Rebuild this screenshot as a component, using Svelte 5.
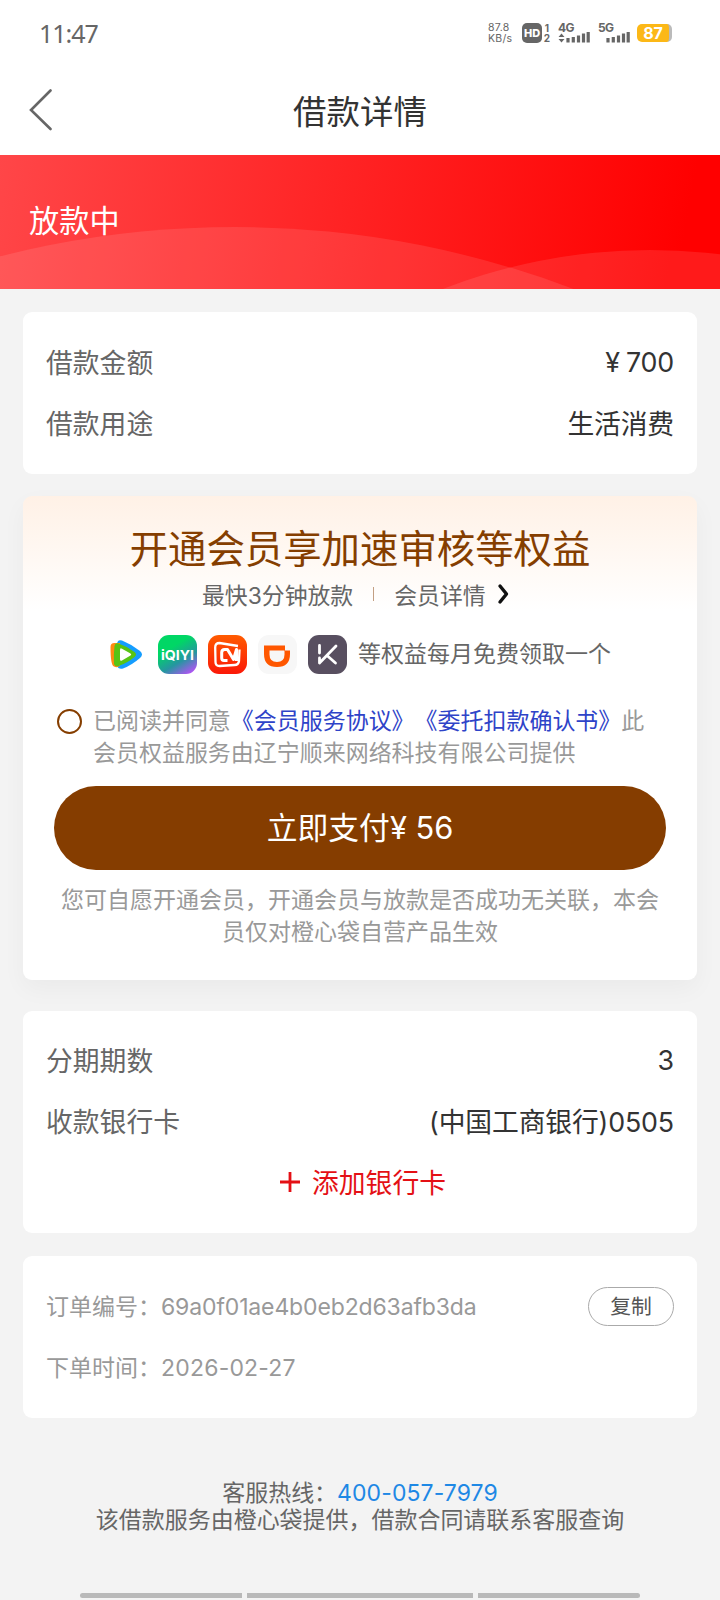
<script lang="ts">
  const amountRows = [
    { label: "借款金额", value: "700", currency: true },
    { label: "借款用途", value: "生活消费", currency: false },
  ]
  const accountRows = [
    { label: "分期期数", value: "3" },
    { label: "收款银行卡", value: "(中国工商银行)0505" },
  ]

  let agreed = false
</script>

<div class="page">
  <div class="status">
    <span class="clock">11:47</span>
    <div class="indicators">
      <span class="speed"><span>87.8</span><span>KB/s</span></span>
      <span class="hd">HD</span>
      <span class="sims"><span>1</span><span>2</span></span>
      <svg class="signal first" width="32" height="26" viewBox="0 -4 32 26">
        <text x="0" y="9">4G</text>
        <path d="M3.5 10.500 6.500 14H.5ZM3.5 19.500.5 16h6Z" />
        <path d="M10 15v4.500M15.300 14v5.500M20.500 12.500v7M25.500 10.500v9M30.200 9v10.500" />
      </svg>
      <svg class="signal second" width="32" height="26" viewBox="0 -4 32 26">
        <text x="0" y="9">5G</text>
        <path d="M10 15v4.500M15.300 14v5.500M20.500 12.500v7M25.500 10.500v9M30.200 9v10.500" />
      </svg>
      <span class="battery">87</span>
    </div>
  </div>

  <header>
    <button class="back" aria-label="返回">
      <svg width="24" height="42" viewBox="0 0 24 42"><path d="M21.500 1.500 2 21l19.500 19" /></svg>
    </button>
    <h1>借款详情</h1>
  </header>

  <section class="banner">
    <svg class="waves" width="720" height="134" viewBox="0 0 720 134">
      <circle cx="235" cy="1027" r="955" />
      <circle cx="650" cy="665" r="570" />
    </svg>
    <span>放款中</span>
  </section>

  <main>
    <section class="card amount">
      {#each amountRows as row}
        <div class="row">
          <span class="label">{row.label}</span>
          <span class="value">{#if row.currency}<span class="yen">¥</span>{/if}{row.value}</span>
        </div>
      {/each}
    </section>

    <section class="card member">
      <h2>开通会员享加速审核等权益</h2>
      <div class="subtitle">
        <span>最快3分钟放款</span>
        <span class="divider"></span>
        <span>会员详情</span>
        <svg width="14" height="22" viewBox="0 0 14 22"><path d="m3 3 6.500 8L3 19" /></svg>
      </div>

      <div class="perks">
        <svg width="39" height="39" viewBox="0 0 39 39">
          <path d="M9 9q.5-5 5-3.500Q24 9.500 32 16q4 3.500 0 7-8 7-17 10.500-5 1-6-3Z" fill="#159dff" />
          <path d="M2.500 12q0-4 4-4H12v23q-3 2-6 .5Q2.500 30.500 2.500 12Z" fill="#ff8b13" />
          <path d="M6.500 11q.5-3.500 4-2.500 9 3 16 8.500 3 2.500 0 5-7 6-16 9-4 1-4.500-2.500-.5-9 .5-17.500Z" fill="#58c414" />
          <path d="M12 15q0-2.500 2-1.300l8.500 4.800q1.500 1 0 2L14 25.500q-2 1-2-1.300Z" fill="#fff" />
        </svg>
        <svg width="39" height="39" viewBox="0 0 39 39">
          <defs>
            <linearGradient id="iqiyi" x1=".3" y1="0" x2=".9" y2="1">
              <stop offset=".25" stop-color="#00d765" />
              <stop offset=".62" stop-color="#2596a0" />
              <stop offset="1" stop-color="#c34bff" />
            </linearGradient>
          </defs>
          <rect width="39" height="39" rx="11" fill="url(#iqiyi)" />
          <text x="3" y="24.500" textLength="33" lengthAdjust="spacingAndGlyphs">iQIYI</text>
        </svg>
        <svg width="39" height="39" viewBox="0 0 39 39">
          <defs>
            <linearGradient id="mango" x1="0" y1="0" x2="0" y2="1">
              <stop stop-color="#ff5b00" /><stop offset="1" stop-color="#fb1808" />
            </linearGradient>
          </defs>
          <rect width="39" height="39" rx="11" fill="url(#mango)" />
          <g fill="none" stroke="#fff" stroke-linejoin="round">
            <path d="M31.500 14.500 31 26q-.5 4-4.500 4l-15 1q-4 0-4-4l-.3-14.500q0-4.500 4.300-4.500l18.500 3" stroke-width="2.300" />
            <path d="M19.500 25.500H16q-2.300 0-2.300-2.500v-5.500q0-3 3-3h2.800l6 10 3-10v11.500" stroke-width="3" />
          </g>
        </svg>
        <svg width="39" height="39" viewBox="0 0 39 39">
          <rect width="39" height="39" rx="11" fill="#f7f7f7" />
          <path d="M6 10.500h21v5h5v3.500q0 13-13 13T6 19Zm5.500 5v4q0 7.500 7.500 7.500t7.500-7.500v-4Z" fill="#ff5700" fill-rule="evenodd" />
        </svg>
        <svg width="39" height="39" viewBox="0 0 39 39">
          <rect width="39" height="39" rx="11" fill="#584f60" />
          <path d="M11.500 10.500V18M28 11 11.500 28V23M19 20.500l8.500 7.500" fill="none" stroke="#fff" stroke-width="2.800" stroke-linecap="round" stroke-linejoin="round" />
        </svg>
        <span>等权益每月免费领取一个</span>
      </div>

      <div class="agreement">
        <button class="check" class:agreed aria-label="同意协议" on:click={() => (agreed = !agreed)}></button>
        <p>
          已阅读并同意<span class="link">《会员服务协议》《委托扣款确认书》</span>此<br />会员权益服务由辽宁顺来网络科技有限公司提供
        </p>
      </div>

      <button class="pay">立即支付<span>¥ 56</span></button>
      <p class="notice">您可自愿开通会员，开通会员与放款是否成功无关联，本会<br />员仅对橙心袋自营产品生效</p>
    </section>

    <section class="card account">
      {#each accountRows as row}
        <div class="row">
          <span class="label">{row.label}</span>
          <span class="value">{row.value}</span>
        </div>
      {/each}
      <button class="add">
        <svg width="22" height="22" viewBox="0 0 22 22"><path d="M11 1v20M1 11h20" /></svg>
        添加银行卡
      </button>
    </section>

    <section class="card order">
      <div class="row">
        <span>订单编号：<span class="number">69a0f01ae4b0eb2d63afb3da</span></span>
        <button class="copy">复制</button>
      </div>
      <div class="row">
        <span>下单时间：<span class="date">2026-02-27</span></span>
      </div>
    </section>
  </main>

  <footer>
    <div>客服热线：<span class="phone">400-057-7979</span></div>
    <div>该借款服务由橙心袋提供，借款合同请联系客服查询</div>
  </footer>

  <div class="navbar"><span></span><span></span><span></span></div>
</div>

<style>
  :global(body) {
    background: #f3f3f3;
  }

  .page {
    display: flex;
    flex-direction: column;
    width: 720px;
    height: 1600px;
    overflow: hidden;
    background: #f3f3f3;
    color: #333;
    font-family: Inter, "Noto Sans CJK SC", sans-serif;
    font-size: 23px;
    white-space: nowrap;
    text-spacing-trim: space-all;
  }

  h1,
  h2,
  p {
    margin: 0;
    font-weight: 400;
  }

  button {
    padding: 0;
    border: 0;
    background: none;
    color: inherit;
    font: inherit;
  }

  svg {
    display: block;
    flex-shrink: 0;
  }

  .status {
    display: flex;
    justify-content: space-between;
    height: 68px;
    box-sizing: border-box;
    padding: 18px 48px 0 39px;
    background: #fff;
    color: #666;
  }

  .clock {
    font-family: "Noto Sans", sans-serif;
    font-size: 25px;
    line-height: 31px;
    letter-spacing: -1px;
  }

  .indicators {
    display: flex;
    align-items: flex-start;
    padding-top: 5px;
  }

  .speed {
    display: flex;
    flex-direction: column;
    width: 34px;
    margin-top: -1px;
    font-size: 10.5px;
    line-height: 11px;
    letter-spacing: 0.3px;
  }

  .hd {
    width: 20px;
    height: 20px;
    border-radius: 5px;
    background: #666;
    color: #fff;
    font-size: 11px;
    font-weight: 800;
    line-height: 20px;
    text-align: center;
  }

  .sims {
    display: flex;
    flex-direction: column;
    width: 8px;
    margin-left: 1px;
    font-size: 10px;
    font-weight: 700;
    line-height: 10px;
    text-align: center;
  }

  .signal {
    margin-top: -4px;
    fill: #666;
  }

  .signal text {
    font-size: 12px;
    font-weight: 700;
    letter-spacing: -0.6px;
  }

  .signal path:last-child {
    fill: none;
    stroke: #666;
    stroke-width: 3.2;
  }

  .first {
    margin-left: 7px;
  }

  .second {
    margin-left: 8px;
  }

  .battery {
    width: 32px;
    height: 18px;
    margin: 1px 0 0 7px;
    border-right: 3px solid #bbb;
    border-radius: 5px;
    background: #fcb817;
    color: #fff;
    font-size: 16px;
    font-weight: 700;
    line-height: 19px;
    text-align: center;
  }

  header {
    display: grid;
    grid-template-columns: 60px 1fr 60px;
    align-items: center;
    height: 87px;
    background: #fff;
  }

  .back {
    padding: 0 0 3px 29px;
  }

  .back path {
    fill: none;
    stroke: #666;
    stroke-width: 2.6;
    stroke-linecap: round;
  }

  h1 {
    font-size: 33.5px;
    line-height: 48px;
    text-align: center;
  }

  .banner {
    position: relative;
    display: flex;
    align-items: center;
    height: 134px;
    box-sizing: border-box;
    padding: 0 0 6px 29px;
    background: linear-gradient(100deg, #ff4648, #f00 94%);
    color: #fff;
    font-size: 30.2px;
  }

  .waves {
    position: absolute;
    inset: 0;
    fill: #fff;
    fill-opacity: 0.1;
  }

  .banner span {
    position: relative;
  }

  main {
    padding: 23px 23px 0;
  }

  .card {
    box-sizing: border-box;
    border-radius: 9px;
    background: #fff;
  }

  .row {
    display: flex;
    align-items: center;
    justify-content: space-between;
    height: 61px;
    padding: 0 23px;
  }

  .amount,
  .account {
    font-size: 26.8px;
  }

  .label {
    color: #666;
  }

  .value {
    letter-spacing: -0.15px;
  }

  .amount {
    height: 162px;
    padding-top: 19px;
  }

  .yen {
    margin-right: 6px;
  }

  .member {
    height: 484px;
    margin-top: 22px;
    padding: 25px 31px 0;
    background: linear-gradient(#fff1e6, #fff 115px);
    box-shadow: 0 9px 24px rgba(0, 0, 0, 0.04);
  }

  h2 {
    color: #853e00;
    font-size: 38.4px;
    line-height: 56px;
    text-align: center;
  }

  .subtitle {
    display: flex;
    align-items: center;
    height: 34px;
    padding-left: 148px;
    color: #666;
    font-size: 22.85px;
  }

  .divider {
    width: 1px;
    height: 14px;
    margin: 0 20px;
    background: #c39f83;
  }

  .subtitle svg {
    margin-left: 11px;
  }

  .subtitle path {
    fill: none;
    stroke: #111;
    stroke-width: 3.4;
    stroke-linecap: round;
    stroke-linejoin: round;
  }

  .perks {
    display: flex;
    align-items: center;
    gap: 11px;
    height: 39px;
    padding: 24px 0 0 54px;
    color: #666;
    font-size: 23px;
  }

  .perks text {
    fill: #fff;
    font-size: 13px;
    font-weight: 700;
  }

  .perks span {
    padding-bottom: 6px;
  }

  .agreement {
    display: flex;
    gap: 11px;
    padding: 31px 0 0 3px;
    color: #999;
    font-size: 22.98px;
    line-height: 32px;
  }

  .check {
    width: 25px;
    height: 25px;
    flex-shrink: 0;
    margin-top: 4px;
    border: 2px solid #853e00;
    border-radius: 50%;
  }

  .agreed {
    background: #853e00;
  }

  .link {
    color: #2e43c8;
  }

  .pay {
    display: block;
    width: 612px;
    height: 84px;
    margin-top: 17px;
    padding-bottom: 5px;
    border-radius: 42px;
    background: #853d00;
    color: #fff;
    font-size: 30.8px;
  }

  .notice {
    padding-top: 14px;
    color: #999;
    font-size: 23px;
    line-height: 32px;
    text-align: center;
  }

  .account {
    height: 222px;
    margin-top: 31px;
    padding-top: 18px;
  }

  .add {
    display: flex;
    align-items: center;
    justify-content: center;
    gap: 11px;
    width: 100%;
    height: 61px;
    padding-left: 5px;
    color: #e41015;
  }

  .add path {
    stroke: #e41015;
    stroke-width: 2.8;
  }

  .order {
    height: 162px;
    margin-top: 23px;
    padding-top: 18px;
    color: #999;
  }

  .number {
    letter-spacing: -0.14px;
  }

  .date {
    letter-spacing: 0.2px;
  }

  .copy {
    width: 86px;
    height: 39px;
    box-sizing: border-box;
    margin-top: 3px;
    border: 1px solid #aaa;
    border-radius: 20px;
    color: #555;
    font-size: 20.8px;
    line-height: 33px;
  }

  footer {
    padding-top: 62px;
    color: #666;
    font-size: 22.98px;
    line-height: 27px;
    text-align: center;
  }

  .phone {
    color: #1e88e5;
    letter-spacing: 0.1px;
  }

  .navbar {
    display: grid;
    grid-template-columns: 162px 226px 162px;
    gap: 5px;
    justify-content: center;
    margin: auto 0 2px;
  }

  .navbar span {
    height: 5px;
    background: #b9b9b9;
  }

  .navbar span:first-child {
    border-radius: 3px 0 0 3px;
  }

  .navbar span:last-child {
    border-radius: 0 3px 3px 0;
  }
</style>
